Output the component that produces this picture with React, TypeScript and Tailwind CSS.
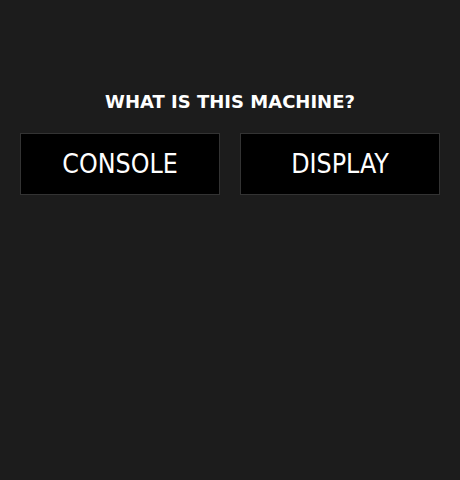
export default function App() {
  const choices = ["CONSOLE", "DISPLAY"];

  return (
    <div
      className="min-h-[480px] w-full bg-[#1c1c1c] px-5 pt-[91px] text-white"
      style={{ fontFamily: '"DejaVu Sans Condensed", "DejaVu Sans", sans-serif' }}
    >
      <p
        className="text-center text-[18px] font-bold leading-[22px]"
        style={{ fontFamily: '"DejaVu Sans", sans-serif' }}
      >
        WHAT IS THIS MACHINE?
      </p>

      <div className="mt-5 grid grid-cols-2 gap-5">
        {choices.map((label) => (
          <button
            key={label}
            className="flex h-[62px] items-center justify-center border border-[#333333] bg-black text-[26.5px] text-white"
          >
            {label}
          </button>
        ))}
      </div>
    </div>
  );
}
